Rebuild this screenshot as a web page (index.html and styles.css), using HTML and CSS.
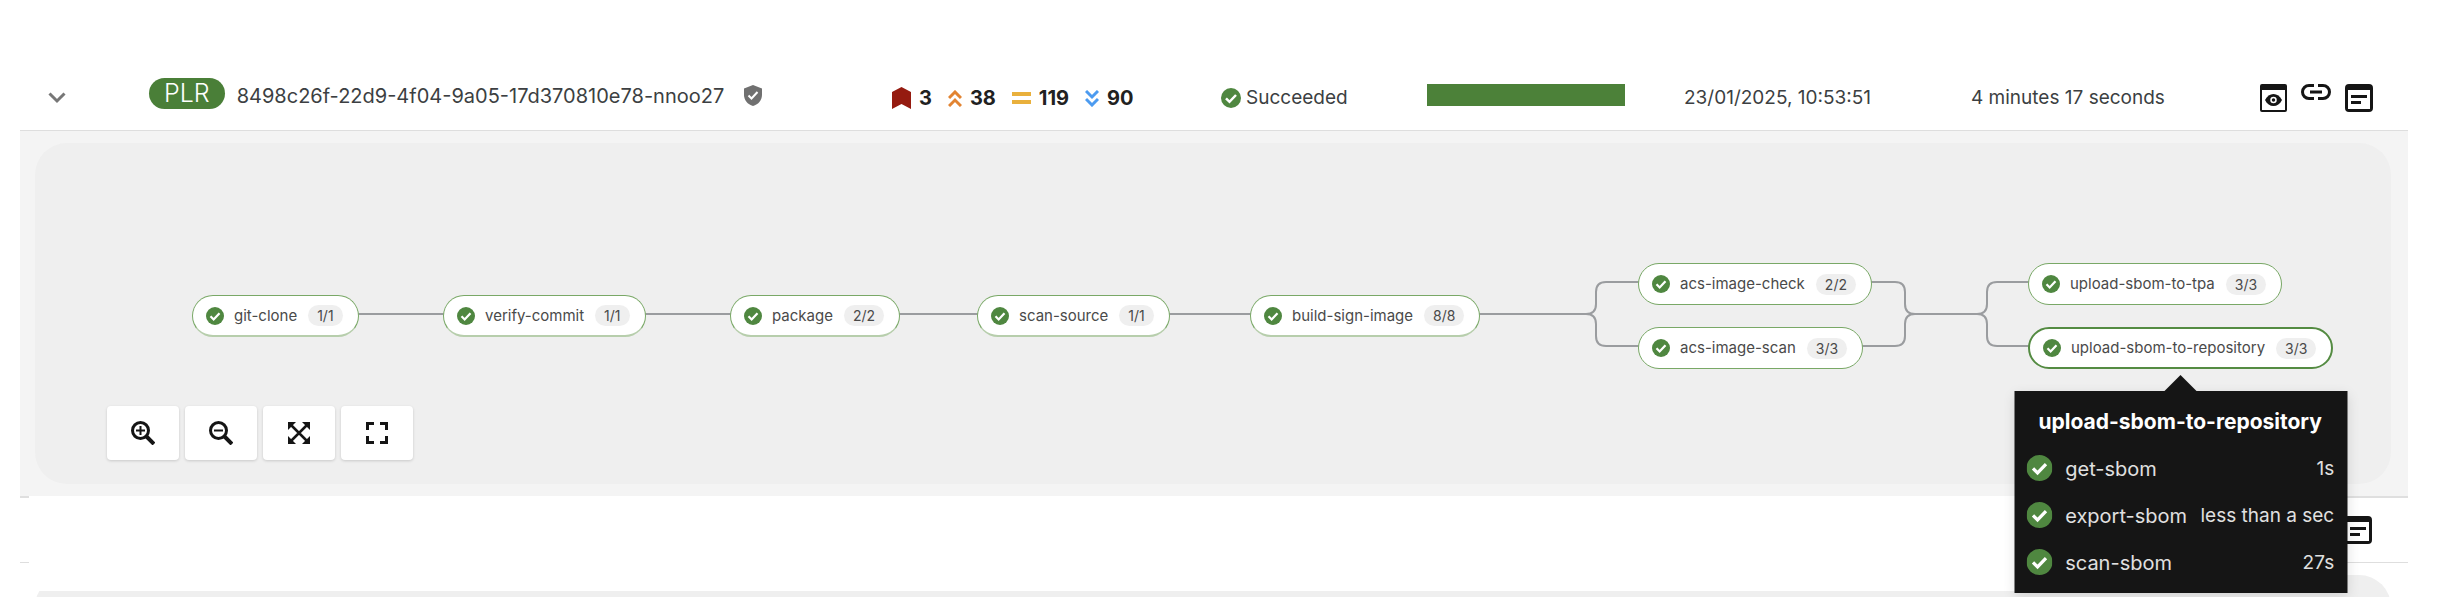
FILE: index.html
```html
<!DOCTYPE html>
<html lang="en">
<head>
<meta charset="utf-8">
<title>Pipeline runs</title>
<link rel="stylesheet" href="styles.css">
</head>
<body>
<svg class="defs" aria-hidden="true">
  <symbol id="check" viewBox="0 0 24 24"><circle cx="12" cy="12" r="12" fill="#4f8740"/><path d="M6 12.4l4.2 4.2 7.8-8.2" fill="none" stroke="#fff" stroke-width="3"/></symbol>
</svg>
<main class="page">
  <section class="run">
    <header class="row">
      <button class="toggle" aria-label="Collapse"><svg width="18" height="12" viewBox="0 0 18 12"><path d="M1.500 1.500L9 9l7.500-7.500" fill="none" stroke="#777" stroke-width="3"/></svg></button>
      <div class="name">
        <span class="plr">PLR</span>
        <a class="uuid" href="#">8498c26f-22d9-4f04-9a05-17d370810e78-nnoo27</a>
        <svg class="shield" width="18" height="21" viewBox="0 0 18 21"><path d="M9 0l9 3.500v6.500c0 5-3.500 9.500-9 11-5.500-1.500-9-6-9-11V3.500z" fill="#707070"/><path d="M4.500 10.500l3 3 6-6.500" fill="none" stroke="#fff" stroke-width="2"/></svg>
      </div>
      <div class="vulns">
        <span class="vuln"><svg width="19" height="22" viewBox="0 0 19 22"><path d="M0 5L9.500 0 19 5v17l-9.500-5L0 22z" fill="#951b10"/></svg>3</span>
        <span class="vuln"><svg width="14" height="17" viewBox="0 0 14 17"><path d="M1 8l6-6 6 6M1 16l6-6 6 6" fill="none" stroke="#e28432" stroke-width="3"/></svg>38</span>
        <span class="vuln"><svg width="19" height="12" viewBox="0 0 19 12"><path d="M0 2h19M0 10h19" stroke="#e9b03c" stroke-width="4"/></svg>119</span>
        <span class="vuln"><svg width="14" height="17" viewBox="0 0 14 17"><path d="M1 1l6 6 6-6M1 9l6 6 6-6" fill="none" stroke="#4c9bf0" stroke-width="3"/></svg>90</span>
      </div>
      <div class="status"><svg width="20" height="20"><use href="#check"/></svg>Succeeded</div>
      <div class="progress"><span class="bar"></span></div>
      <time class="cell">23/01/2025, 10:53:51</time>
      <div class="cell">4 minutes 17 seconds</div>
      <div class="actions">
        <button aria-label="View output"><svg width="27" height="28" viewBox="0 0 27 28"><path fill-rule="evenodd" d="M2 0h23a2 2 0 0 1 2 2v24a2 2 0 0 1-2 2H2a2 2 0 0 1-2-2V2a2 2 0 0 1 2-2zM2 6v20h23V6z"/><path d="M5 16c2-4 5-6 8.500-6s6.500 2 8.500 6c-2 4-5 6-8.500 6S7 20 5 16z"/><circle cx="13.500" cy="16" r="2.500" fill="none" stroke="#fff" stroke-width="1.500"/></svg></button>
        <button aria-label="View link"><svg width="30" height="16" viewBox="0 0 30 16"><path d="M13 1.500H8a6.500 6.500 0 0 0 0 13h5M17 1.500h5a6.500 6.500 0 0 1 0 13h-5M9 8h12" fill="none" stroke="#151515" stroke-width="3"/></svg></button>
        <button aria-label="View logs"><svg width="28" height="28" viewBox="0 0 28 28"><path fill-rule="evenodd" d="M4 0h20a4 4 0 0 1 4 4v20a4 4 0 0 1-4 4H4a4 4 0 0 1-4-4V4a4 4 0 0 1 4-4zM3 6v19h22V6z"/><path d="M6 11h16v3H6zM6 17h10v3H6z"/></svg></button>
      </div>
    </header>
    <div class="panel">
      <div class="canvas">
        <svg class="edges" aria-hidden="true">
          <path d="M300 171H1551q10 0 10-10V149q0-10 10-10H1860q10 0 10 10v12q0 10 10 10H1942q10 0 10-10V149q0-10 10-10H2000"/>
          <path d="M1551 171q10 0 10 10v12q0 10 10 10H1860q10 0 10-10V181q0-10 10-10M1942 171q10 0 10 10v12q0 10 10 10H2000"/>
        </svg>
        <div class="node main git-clone"><svg class="tick"><use href="#check"/></svg>git-clone<span class="count">1/1</span></div>
        <div class="node main verify-commit"><svg class="tick"><use href="#check"/></svg>verify-commit<span class="count">1/1</span></div>
        <div class="node main package"><svg class="tick"><use href="#check"/></svg>package<span class="count">2/2</span></div>
        <div class="node main scan-source"><svg class="tick"><use href="#check"/></svg>scan-source<span class="count">1/1</span></div>
        <div class="node main build-sign-image"><svg class="tick"><use href="#check"/></svg>build-sign-image<span class="count">8/8</span></div>
        <div class="node upper acs"><svg class="tick"><use href="#check"/></svg>acs-image-check<span class="count">2/2</span></div>
        <div class="node lower acs"><svg class="tick"><use href="#check"/></svg>acs-image-scan<span class="count">3/3</span></div>
        <div class="node upper upload"><svg class="tick"><use href="#check"/></svg>upload-sbom-to-tpa<span class="count">3/3</span></div>
        <div class="node lower upload active"><svg class="tick"><use href="#check"/></svg>upload-sbom-to-repository<span class="count">3/3</span>
          <div class="tooltip" role="tooltip">
            <strong class="tooltip-title">upload-sbom-to-repository</strong>
            <ul class="steps">
              <li><svg class="step-tick"><use href="#check"/></svg><span>get-sbom</span><span class="took">1s</span></li>
              <li><svg class="step-tick"><use href="#check"/></svg><span>export-sbom</span><span class="took">less than a sec</span></li>
              <li><svg class="step-tick"><use href="#check"/></svg><span>scan-sbom</span><span class="took">27s</span></li>
            </ul>
          </div>
        </div>
        <div class="zoom">
          <button aria-label="Zoom in"><svg width="24" height="24" viewBox="0 0 24 24"><circle cx="9.500" cy="9.500" r="8" fill="none" stroke="#151515" stroke-width="3"/><path d="M15 15l8 8" stroke="#151515" stroke-width="4"/><path d="M5 9.500h9M9.500 5v9" stroke="#151515" stroke-width="2"/></svg></button>
          <button aria-label="Zoom out"><svg width="24" height="24" viewBox="0 0 24 24"><circle cx="9.500" cy="9.500" r="8" fill="none" stroke="#151515" stroke-width="3"/><path d="M15 15l8 8" stroke="#151515" stroke-width="4"/><path d="M5 9.500h9" stroke="#151515" stroke-width="2"/></svg></button>
          <button aria-label="Fit to screen"><svg width="22" height="22" viewBox="0 0 22 22"><path d="M0 0h8L0 8zM14 0h8v8zM0 14l8 8H0zM22 14v8h-8z"/><path d="M2 2l18 18M20 2L2 20" stroke="#151515" stroke-width="2.500"/></svg></button>
          <button aria-label="Full screen"><svg width="22" height="22" viewBox="0 0 22 22"><path d="M1.500 8V1.500H8M14 1.500h6.500V8M20.500 14v6.500H14M8 20.500H1.500V14" fill="none" stroke="#151515" stroke-width="3"/></svg></button>
        </div>
      </div>
    </div>
  </section>
  <section class="run next">
    <header class="row">
      <div class="actions">
        <button aria-label="View logs"><svg width="28" height="28" viewBox="0 0 28 28"><path fill-rule="evenodd" d="M4 0h20a4 4 0 0 1 4 4v20a4 4 0 0 1-4 4H4a4 4 0 0 1-4-4V4a4 4 0 0 1 4-4zM3 6v19h22V6z"/><path d="M6 11h16v3H6zM6 17h10v3H6z"/></svg></button>
      </div>
    </header>
    <div class="panel"><div class="canvas"></div></div>
    <div class="cover"></div>
  </section>
</main>
</body>
</html>
```
FILE: styles.css
```css
* { box-sizing: border-box; }

body {
  margin: 0;
  background: #fff;
  color: #3c3f42;
  font: 19px/24px Inter, "Noto Sans", sans-serif;
}

button {
  border: 0;
  padding: 0;
  background: none;
  font: inherit;
  color: #151515;
  cursor: pointer;
}

svg { display: block; flex: none; fill: #151515; }

.defs { position: absolute; width: 0; height: 0; }

.page { padding: 66px 32px 0 20px; }

.row {
  display: grid;
  grid-template-columns: 129fr 743fr 329fr 206fr 257fr 287fr 289fr 148fr;
  align-items: center;
  min-height: 65px;
  border-bottom: 1px solid #dedede;
  white-space: nowrap;
}

.toggle { justify-self: start; margin-left: 28px; }

.name { display: flex; align-items: center; gap: 12px; padding-bottom: 5px; }

.plr {
  padding: 0 15px;
  margin-bottom: 4px;
  border-radius: 16px;
  background: #4a7f38;
  color: #fff;
  font-size: 25px;
  font-weight: 300;
  line-height: 31px;
}

.uuid { color: #3c3f42; font-size: 20px; text-decoration: none; }

.shield { margin-left: 8px; }

.vulns { display: flex; align-items: center; gap: 16px; }

.vuln {
  display: flex;
  align-items: center;
  gap: 8px;
  color: #212121;
  font-size: 20px;
  font-weight: 700;
}

.status { display: flex; align-items: center; gap: 5px; }

.progress { padding-bottom: 6px; }

.bar { display: block; width: 77%; height: 22px; background: #4c8139; }

.actions {
  display: flex;
  grid-column: -2;
  align-items: flex-start;
  gap: 14px;
}

.panel { padding: 12px 17px 12px 15px; background: #f4f4f4; }

.canvas {
  position: relative;
  min-height: 341px;
  border-radius: 32px;
  background: #efefef;
}

.edges {
  position: absolute;
  inset: 0;
  width: 100%;
  height: 100%;
}

.edges path { fill: none; stroke: #9a9c9f; stroke-width: 2; }

.node {
  position: absolute;
  display: flex;
  align-items: center;
  height: 42px;
  padding: 0 15px 0 13px;
  border: 1px solid #79a866;
  border-radius: 21px;
  background: #fff;
  color: #4a4a4a;
  font-size: 15px;
  white-space: nowrap;
}

.main { top: 152px; border-bottom: 2px solid #b7ceac; }
.upper { top: 120px; }
.lower { top: 184px; }

.git-clone { left: 157px; }
.verify-commit { left: 408px; }
.package { left: 695px; }
.scan-source { left: 942px; }
.build-sign-image { left: 1215px; }
.acs { left: 1603px; }
.upload { left: 1993px; }

.active { border: 2px solid #548b42; }

.tick { width: 18px; height: 18px; margin-right: 10px; }

.count {
  margin-left: 11px;
  padding: 0 9px;
  border-radius: 11px;
  background: #efefef;
  font-size: 14px;
  line-height: 21px;
}

.tooltip {
  position: absolute;
  z-index: 2;
  top: 62px;
  left: 50%;
  width: 333px;
  padding: 17px 13px 8px 12px;
  background: #151515;
  box-shadow: 0 4px 12px rgba(0, 0, 0, 0.12);
  color: #e0e0e0;
  font-size: 20px;
  transform: translateX(-50%);
}

.tooltip::before {
  content: "";
  position: absolute;
  top: -16px;
  left: 50%;
  margin-left: -16px;
  border: 16px solid transparent;
  border-top: 0;
  border-bottom-color: #151515;
}

.tooltip-title {
  display: block;
  color: #fff;
  font-size: 21px;
  line-height: 28px;
  text-align: center;
}

.steps { margin: 8px 0 0; padding: 0; list-style: none; }

.steps li { display: flex; align-items: center; height: 47px; }

.steps span { padding-top: 3px; }

.step-tick { width: 26px; height: 26px; margin-right: 13px; }

.took { margin-left: auto; font-size: 19px; }

.zoom {
  position: absolute;
  left: 72px;
  bottom: 24px;
  display: flex;
  gap: 6px;
}

.zoom button {
  display: grid;
  place-items: center;
  width: 72px;
  height: 54px;
  border-radius: 4px;
  background: #fff;
  box-shadow: 0 1px 3px rgba(0, 0, 0, 0.16);
}

.next { position: relative; border-top: 2px solid #dfdfdf; }

.next .actions { justify-content: flex-end; padding-right: 36px; }

.next .panel { overflow: hidden; height: 34px; background: #fff; }

/* blank strip over the collapsed run */
.cover {
  position: absolute;
  inset: -2px 80px 6px 9px;
  background: #fff;
}
```
